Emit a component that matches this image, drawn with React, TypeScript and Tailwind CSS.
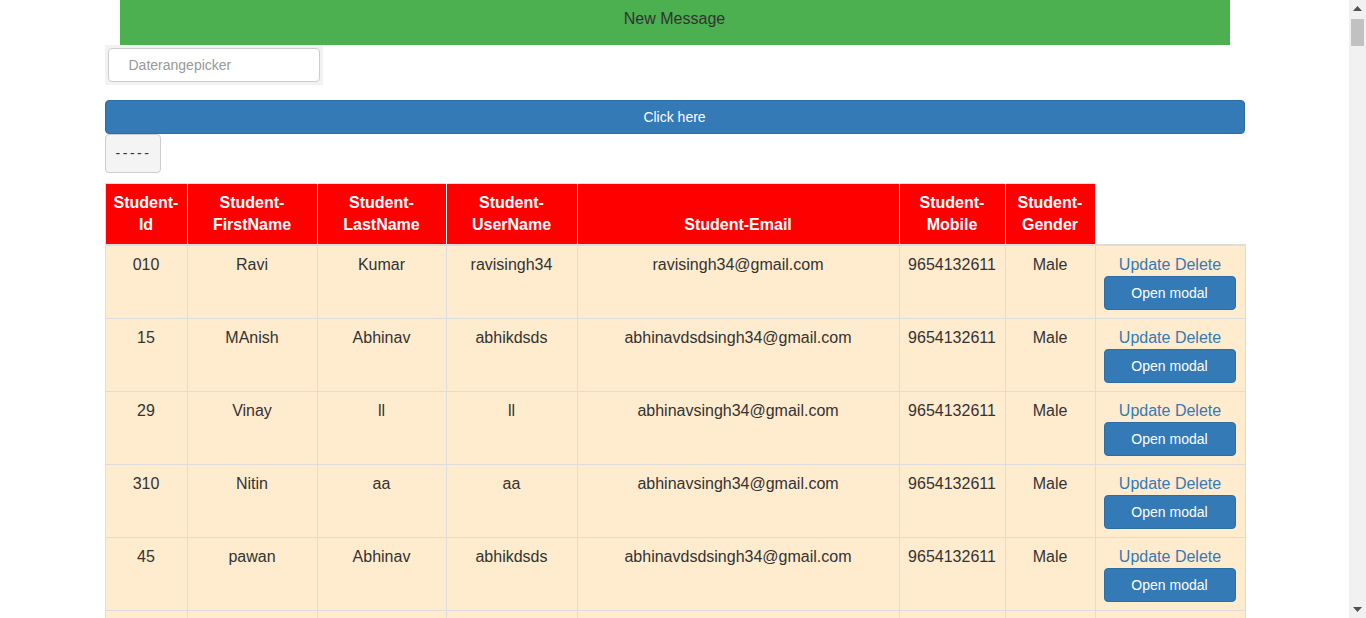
import React from "react";

const rows = [
  ["010", "Ravi", "Kumar", "ravisingh34", "ravisingh34@gmail.com", "9654132611", "Male"],
  ["15", "MAnish", "Abhinav", "abhikdsds", "abhinavdsdsingh34@gmail.com", "9654132611", "Male"],
  ["29", "Vinay", "ll", "ll", "abhinavsingh34@gmail.com", "9654132611", "Male"],
  ["310", "Nitin", "aa", "aa", "abhinavsingh34@gmail.com", "9654132611", "Male"],
  ["45", "pawan", "Abhinav", "abhikdsds", "abhinavdsdsingh34@gmail.com", "9654132611", "Male"],
  ["46", "pawan", "Abhinav", "abhikdsds", "abhinavdsdsingh34@gmail.com", "9654132611", "Male"],
];

const headers: [string, string][] = [
  ["Student-", "Id"],
  ["Student-", "FirstName"],
  ["Student-", "LastName"],
  ["Student-", "UserName"],
  ["", "Student-Email"],
  ["Student-", "Mobile"],
  ["Student-", "Gender"],
];

export default function App() {
  return (
    <div
      className="flex h-[618px] w-[1366px] overflow-hidden bg-white text-[#333]"
      style={{ fontFamily: '"Liberation Sans", Arial, sans-serif' }}
    >
      <div className="flex-1 overflow-hidden">
        <div className="mx-auto w-[1140px]">
          <div className="mx-[15px] h-[45px] bg-[#4caf50] pt-[8px] text-center text-[16px] leading-[22px] text-[#333]">
            New Message
          </div>
          <div className="flex h-[40px] w-[218px] items-start bg-[#f2f2f2] px-[3px] pt-[3px]">
            <div className="flex h-[34px] w-[212px] items-center rounded-[4px] border border-[#ccc] bg-white pl-[20px] text-[14px] text-[#999]">
              Daterangepicker
            </div>
          </div>
          <div className="mt-[15px] flex h-[34px] items-center justify-center rounded-[4px] border border-[#2e6da4] bg-[#337ab7] text-[14px] text-white">
            Click here
          </div>
          <div className="flex h-[39px] w-[56px] items-center justify-center rounded-[4px] border border-[#ccc] bg-[#f4f4f4] pl-[2px] text-[14px] tracking-[2.5px] text-[#333]">
            -----
          </div>
          <table className="mt-[10px] w-[1140px] table-fixed border-collapse text-[16px] leading-[22px]">
            <colgroup>
              <col className="w-[82px]" />
              <col className="w-[130px]" />
              <col className="w-[129px]" />
              <col className="w-[131px]" />
              <col className="w-[322px]" />
              <col className="w-[106px]" />
              <col className="w-[90px]" />
              <col className="w-[150px]" />
            </colgroup>
            <thead>
              <tr>
                {headers.map((h, i) => (
                  <th
                    key={i}
                    className={`border border-white border-t-[#ddd] border-b-2 border-b-[#ddd] bg-[#ff0000] p-[8px] text-center align-bottom font-bold text-white ${
                      i === 0 ? "border-l-[#ddd]" : ""
                    }`}
                  >
                    {h[0] && (
                      <>
                        {h[0]}
                        <br />
                      </>
                    )}
                    {h[1]}
                  </th>
                ))}
                <th className="border-0 border-b-2 border-b-[#ddd] bg-white p-0"></th>
              </tr>
            </thead>
            <tbody>
              {rows.map((r, i) => (
                <tr key={i} className="bg-[#ffebcd]">
                  {r.map((c, j) => (
                    <td key={j} className="border border-[#ddd] p-[8px] text-center align-top">
                      {c}
                    </td>
                  ))}
                  <td className="border border-[#ddd] p-[8px] text-center align-top">
                    <div className="text-[#337ab7]">Update Delete</div>
                    <div className="flex h-[34px] w-[132px] items-center justify-center rounded-[4px] border border-[#2e6da4] bg-[#337ab7] text-[14px] text-white">
                      Open modal
                    </div>
                  </td>
                </tr>
              ))}
            </tbody>
          </table>
        </div>
      </div>
      <div className="flex w-[17px] flex-col items-center bg-[#f1f1f1]">
        <div className="flex h-[17px] items-center justify-center">
          <svg width="9" height="5" viewBox="0 0 9 5">
            <path d="M0 5 L4.5 0 L9 5 Z" fill="#505050" />
          </svg>
        </div>
        <div className="mt-[2px] h-[27px] w-[13px] bg-[#c1c1c1]" />
        <div className="flex-1" />
        <div className="flex h-[17px] items-center justify-center">
          <svg width="9" height="5" viewBox="0 0 9 5">
            <path d="M0 0 L9 0 L4.5 5 Z" fill="#505050" />
          </svg>
        </div>
      </div>
    </div>
  );
}
